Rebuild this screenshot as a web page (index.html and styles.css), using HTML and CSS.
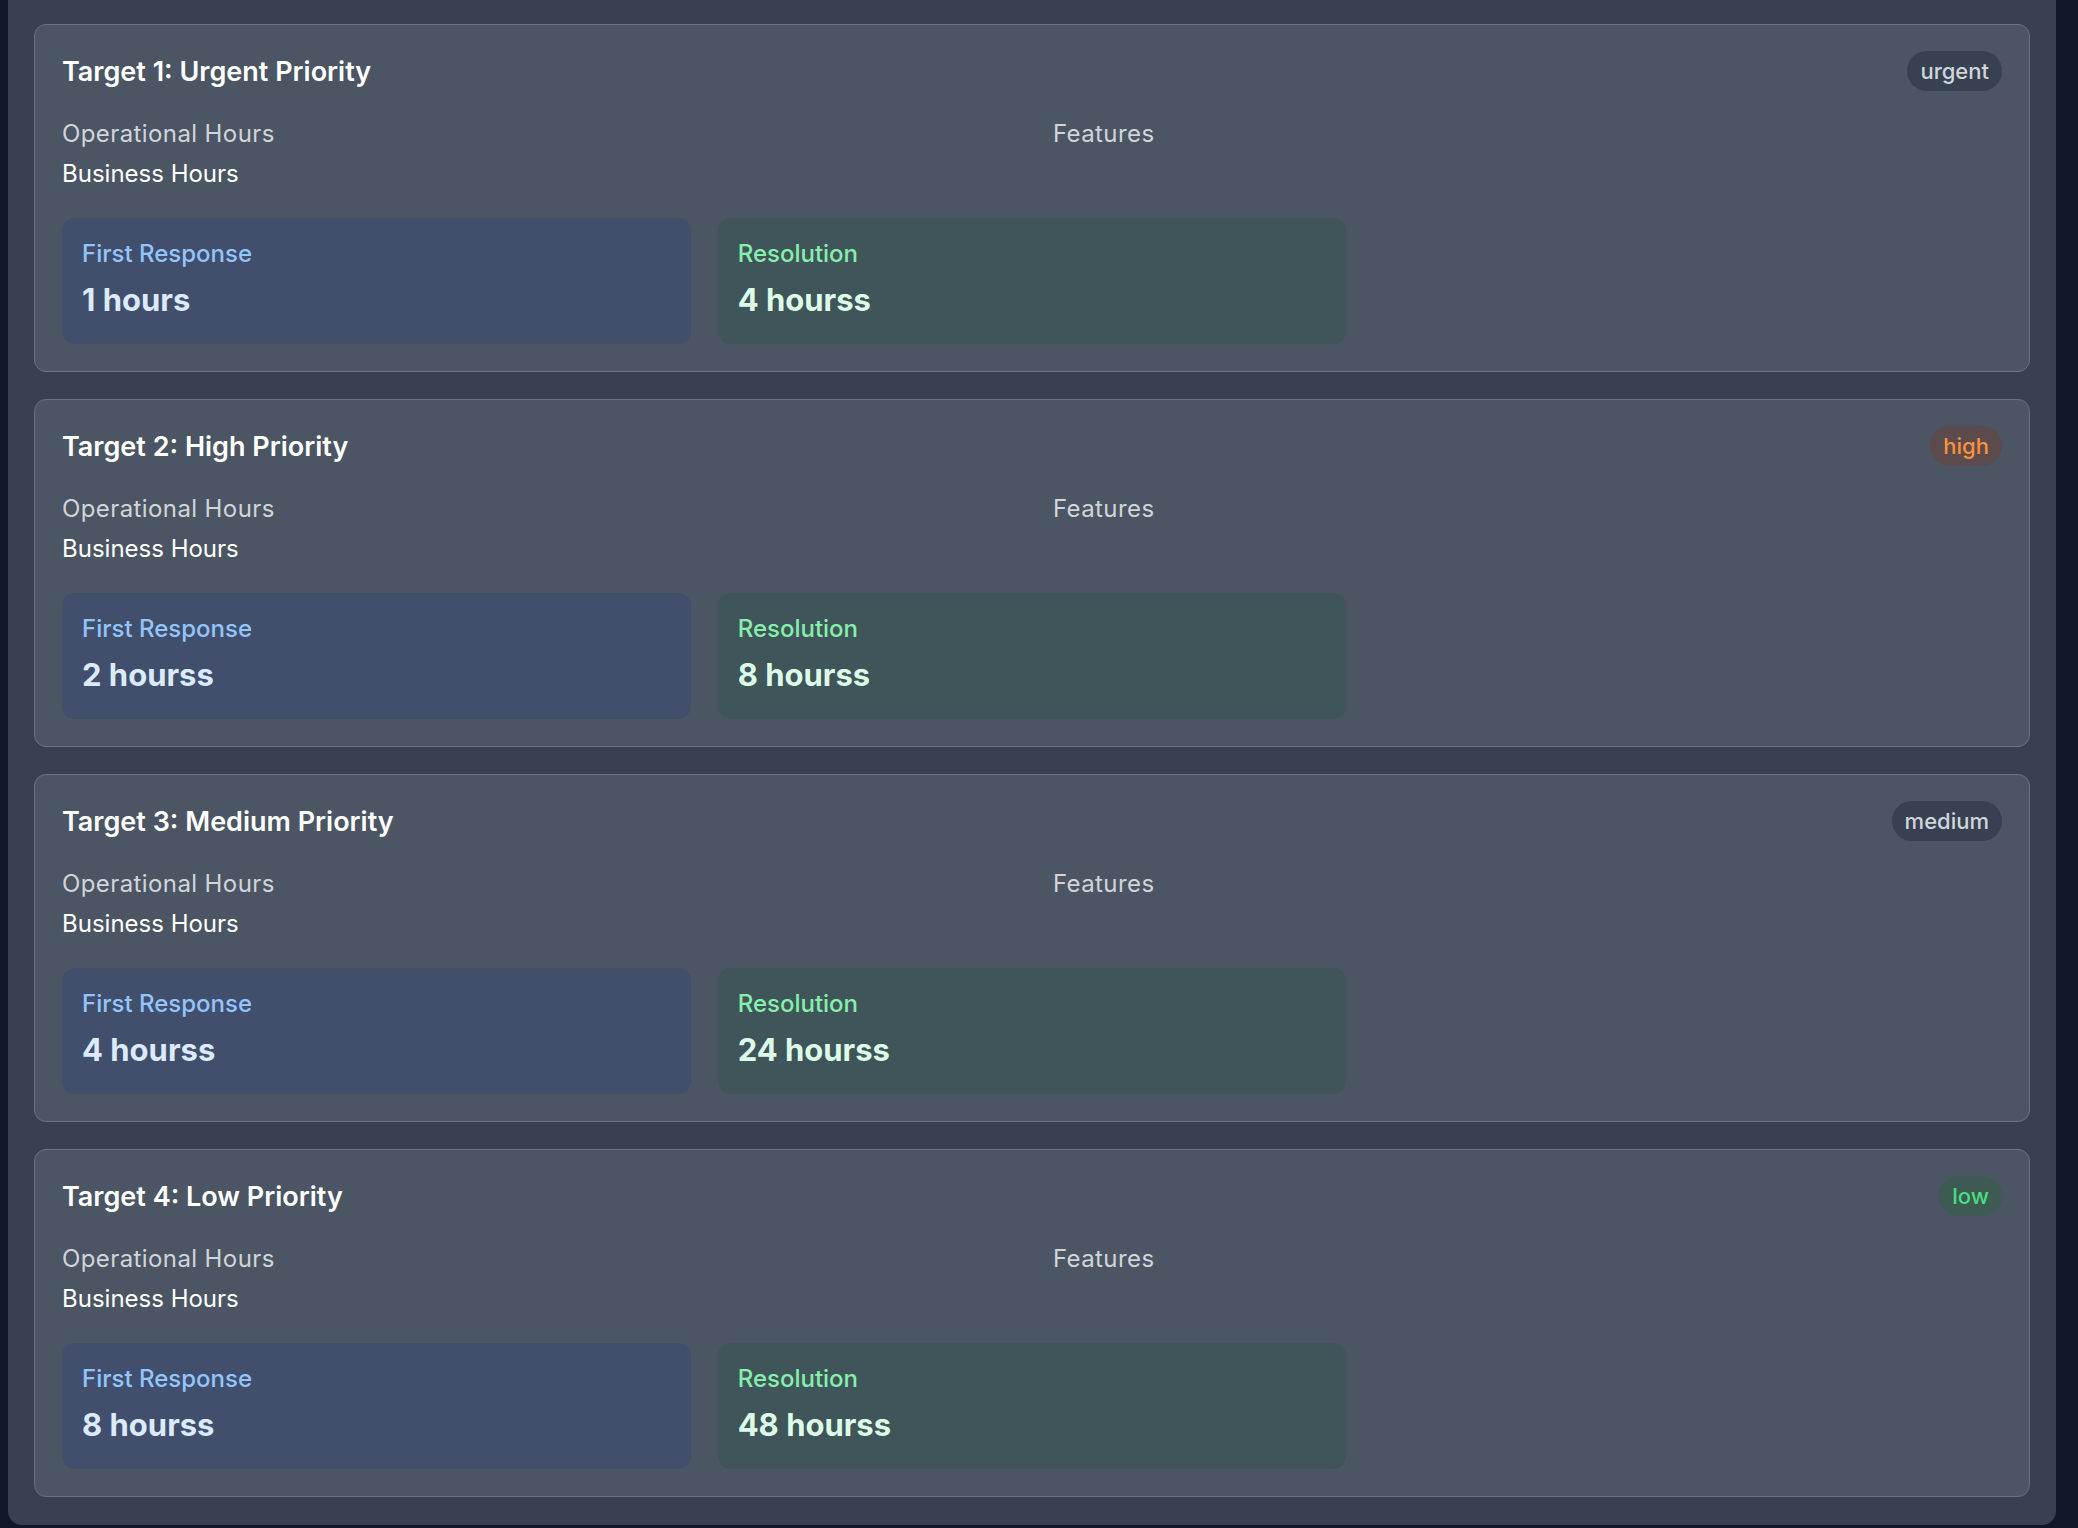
FILE: index.html
```html
<!DOCTYPE html>
<html lang="en">
<head>
  <meta charset="UTF-8">
  <meta name="viewport" content="width=device-width, initial-scale=1.0">
  <title>SLA Targets</title>
  <link rel="stylesheet" href="styles.css">
</head>
<body>
  <div class="panel">
    <div class="target">
      <div class="target-head">
        <h3>Target 1: Urgent Priority</h3>
        <span class="badge badge-urgent">urgent</span>
      </div>
      <div class="info">
        <div>
          <p class="label">Operational Hours</p>
          <p class="value">Business Hours</p>
        </div>
        <div>
          <p class="label">Features</p>
        </div>
      </div>
      <div class="times">
        <div class="time time-first">
          <p class="time-label">First Response</p>
          <p class="time-value">1 hours</p>
        </div>
        <div class="time time-res">
          <p class="time-label">Resolution</p>
          <p class="time-value">4 hourss</p>
        </div>
      </div>
    </div>

    <div class="target">
      <div class="target-head">
        <h3>Target 2: High Priority</h3>
        <span class="badge badge-high">high</span>
      </div>
      <div class="info">
        <div>
          <p class="label">Operational Hours</p>
          <p class="value">Business Hours</p>
        </div>
        <div>
          <p class="label">Features</p>
        </div>
      </div>
      <div class="times">
        <div class="time time-first">
          <p class="time-label">First Response</p>
          <p class="time-value">2 hourss</p>
        </div>
        <div class="time time-res">
          <p class="time-label">Resolution</p>
          <p class="time-value">8 hourss</p>
        </div>
      </div>
    </div>

    <div class="target">
      <div class="target-head">
        <h3>Target 3: Medium Priority</h3>
        <span class="badge badge-medium">medium</span>
      </div>
      <div class="info">
        <div>
          <p class="label">Operational Hours</p>
          <p class="value">Business Hours</p>
        </div>
        <div>
          <p class="label">Features</p>
        </div>
      </div>
      <div class="times">
        <div class="time time-first">
          <p class="time-label">First Response</p>
          <p class="time-value">4 hourss</p>
        </div>
        <div class="time time-res">
          <p class="time-label">Resolution</p>
          <p class="time-value">24 hourss</p>
        </div>
      </div>
    </div>

    <div class="target">
      <div class="target-head">
        <h3>Target 4: Low Priority</h3>
        <span class="badge badge-low">low</span>
      </div>
      <div class="info">
        <div>
          <p class="label">Operational Hours</p>
          <p class="value">Business Hours</p>
        </div>
        <div>
          <p class="label">Features</p>
        </div>
      </div>
      <div class="times">
        <div class="time time-first">
          <p class="time-label">First Response</p>
          <p class="time-value">8 hourss</p>
        </div>
        <div class="time time-res">
          <p class="time-label">Resolution</p>
          <p class="time-value">48 hourss</p>
        </div>
      </div>
    </div>
  </div>
</body>
</html>
```

FILE: styles.css
```css
* { box-sizing: border-box; }
body { margin: 0; background: #111827; font-family: Inter, "Noto Sans", sans-serif; color: #f9fafb; }
p, h3 { margin: 0; }

.panel { margin-left: 8px; width: 2048px; padding: 24px 26px 28px; background: #374151; border-radius: 0 0 14px 14px; display: flex; flex-direction: column; gap: 27px; }

.target { background: #4b5563; border: 1px solid #6b7280; border-radius: 12px; padding: 26px 27px 27px; }
.target-head { display: flex; justify-content: space-between; align-items: center; height: 40px; }
.target-head h3 { font-size: 27px; font-weight: 600; line-height: 37px; color: #fff; }

.badge { height: 40px; padding: 0 13px; border-radius: 20px; font-size: 22px; font-weight: 500; line-height: 40px; }
.badge-urgent, .badge-medium { background: #374151; color: #d1d5db; }
.badge-high { background: #5c4a4c; color: #fb923c; }
.badge-low { background: #3d5a53; color: #4ade80; }

.info { display: grid; grid-template-columns: 1fr 1fr; gap: 42px; margin-top: 27px; }
.label { font-size: 24px; line-height: 32px; letter-spacing: 0.4px; color: #d1d5db; }
.value { font-size: 24px; line-height: 32px; color: #fff; margin-top: 8px; }

.times { display: grid; grid-template-columns: repeat(3, 1fr); gap: 27px; margin-top: 28px; }
.time { height: 126px; padding: 20px; border-radius: 13px; }
.time-first { background: #414f6c; }
.time-res { background: #405559; }
.time-label { font-size: 24px; font-weight: 500; line-height: 32px; }
.time-value { font-size: 31px; font-weight: 700; line-height: 49px; margin-top: 5px; }
.time-first .time-label { color: #93c5fd; }
.time-first .time-value { color: #dbeafe; }
.time-res .time-label { color: #86efac; }
.time-res .time-value { color: #dcfce7; }
```
